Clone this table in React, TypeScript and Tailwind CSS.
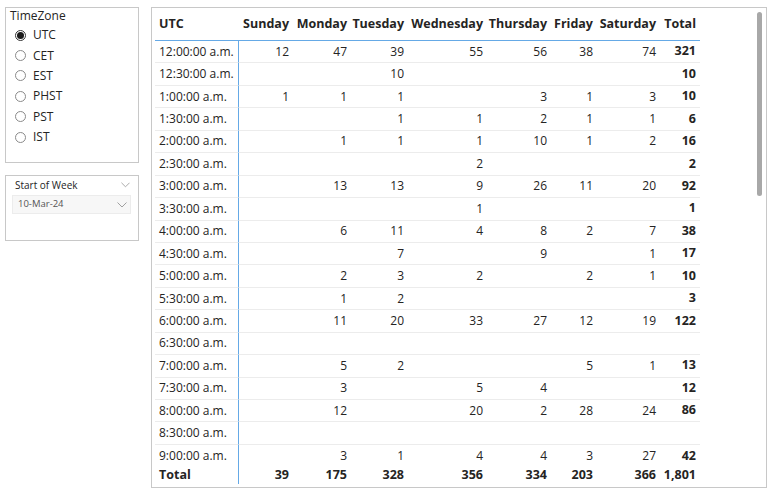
import React from "react";

type Cell = number | string;
const rows: Cell[][] = [
  ["12:00:00 a.m.", 12, 47, 39, 55, 56, 38, 74, 321],
  ["12:30:00 a.m.", "", "", 10, "", "", "", "", 10],
  ["1:00:00 a.m.", 1, 1, 1, "", 3, 1, 3, 10],
  ["1:30:00 a.m.", "", "", 1, 1, 2, 1, 1, 6],
  ["2:00:00 a.m.", "", 1, 1, 1, 10, 1, 2, 16],
  ["2:30:00 a.m.", "", "", "", 2, "", "", "", 2],
  ["3:00:00 a.m.", "", 13, 13, 9, 26, 11, 20, 92],
  ["3:30:00 a.m.", "", "", "", 1, "", "", "", 1],
  ["4:00:00 a.m.", "", 6, 11, 4, 8, 2, 7, 38],
  ["4:30:00 a.m.", "", "", 7, "", 9, "", 1, 17],
  ["5:00:00 a.m.", "", 2, 3, 2, "", 2, 1, 10],
  ["5:30:00 a.m.", "", 1, 2, "", "", "", "", 3],
  ["6:00:00 a.m.", "", 11, 20, 33, 27, 12, 19, 122],
  ["6:30:00 a.m.", "", "", "", "", "", "", "", ""],
  ["7:00:00 a.m.", "", 5, 2, "", "", 5, 1, 13],
  ["7:30:00 a.m.", "", 3, "", 5, 4, "", "", 12],
  ["8:00:00 a.m.", "", 12, "", 20, 2, 28, 24, 86],
  ["8:30:00 a.m.", "", "", "", "", "", "", "", ""],
  ["9:00:00 a.m.", "", 3, 1, 4, 4, 3, 27, 42],
];
const totals: Cell[] = ["Total", 39, 175, 328, 356, 334, 203, 366, "1,801"];
const headers = ["UTC", "Sunday", "Monday", "Tuesday", "Wednesday", "Thursday", "Friday", "Saturday", "Total"];
const cols = "grid grid-cols-[84px_54px_58px_57px_79px_64px_46px_63px_40px]";
const zones = ["UTC", "CET", "EST", "PHST", "PST", "IST"];

const Chevron = ({ cls }: { cls: string }) => (
  <svg className={cls} viewBox="0 0 10 6" fill="none">
    <path d="M0.5 0.5 L5 5 L9.5 0.5" stroke="#a0a0a0" strokeWidth="1" />
  </svg>
);

export default function App() {
  return (
    <div
      className="w-[784px] h-[494px] bg-white flex gap-[12px] pt-[7px] pl-[5px] text-[#252423]"
      style={{ fontFamily: '"Open Sans", "Noto Sans", sans-serif' }}
    >
      <div className="w-[134px] shrink-0 flex flex-col gap-[12px]">
        <div className="h-[156px] border border-[#c8c8c8] pl-[4px] pt-[1px]">
          <div className="text-[12px] leading-[14px]">TimeZone</div>
          <div className="flex flex-col mt-[2px] pl-[5px]">
            {zones.map((z, i) => (
              <div key={z} className="flex items-center h-[20.4px] gap-[7px]">
                <div
                  className={`w-[11px] h-[11px] rounded-full border flex items-center justify-center ${
                    i === 0 ? "border-[#333]" : "border-[#8a8a8a]"
                  }`}
                >
                  {i === 0 && <div className="w-[7px] h-[7px] rounded-full bg-[#1a1a1a]" />}
                </div>
                <span className="text-[12px] leading-[14px]">{z}</span>
              </div>
            ))}
          </div>
        </div>
        <div className="h-[66px] border border-[#c8c8c8] pl-[6px] pr-[7px]">
          <div className="flex items-center justify-between h-[18px] pl-[3px]">
            <span className="text-[10px]">Start of Week</span>
            <Chevron cls="w-[9px] h-[6px] mr-[1px]" />
          </div>
          <div className="mt-[1px] h-[19px] bg-[#f7f7f7] border border-[#ececec] flex items-center justify-between pl-[5px] pr-[3px]">
            <span className="text-[9.5px] text-[#555]">10-Mar-24</span>
            <Chevron cls="w-[10px] h-[6px]" />
          </div>
        </div>
      </div>

      <div className="w-[616px] h-[481px] shrink-0 border border-[#c8c8c8] pl-[3px] flex">
        <div className="w-[545px] shrink-0">
          <div className={`${cols} h-[33px] border-b border-[#65a9e6] items-center text-[12.5px] font-bold`}>
            {headers.map((h, i) => (
              <div key={h} className={i === 0 ? "pl-[4px]" : "text-right pr-[4px] whitespace-nowrap"}>
                {h}
              </div>
            ))}
          </div>
          <div>
            {rows.map((r, ri) => {
              const last = ri === rows.length - 1;
              return (
                <div key={ri} className={`${cols} ${last ? "h-[18px] leading-[14px]" : "h-[22.44px]"} text-[12px]`}>
                  {r.map((c, ci) => (
                    <div
                      key={ci}
                      className={
                        (ci === 0
                          ? "h-full flex items-center pl-[4px] border-r border-[#65a9e6] whitespace-nowrap"
                          : `h-full flex items-center justify-end pr-[4px] ${ci === 8 ? "font-bold text-[12.5px]" : ""}`) +
                        (last ? " pt-[4px]" : " border-b border-b-[#ececec]")
                      }
                    >
                      {c}
                    </div>
                  ))}
                </div>
              );
            })}
          </div>
          <div className={`${cols} h-[21px] text-[12.5px] leading-[15px] font-bold bg-white`}>
            {totals.map((c, ci) => (
              <div
                key={ci}
                className={
                  ci === 0
                    ? "h-full flex items-center pl-[4px] pt-[3px] border-r border-[#65a9e6]"
                    : "h-full flex items-center justify-end pr-[4px] pt-[3px] whitespace-nowrap"
                }
              >
                {c}
              </div>
            ))}
          </div>
        </div>
        <div className="ml-auto mr-[4px] mt-[4px] w-[5px] h-[184px] shrink-0 rounded-full bg-[#a8a8a8]" />
      </div>
    </div>
  );
}
